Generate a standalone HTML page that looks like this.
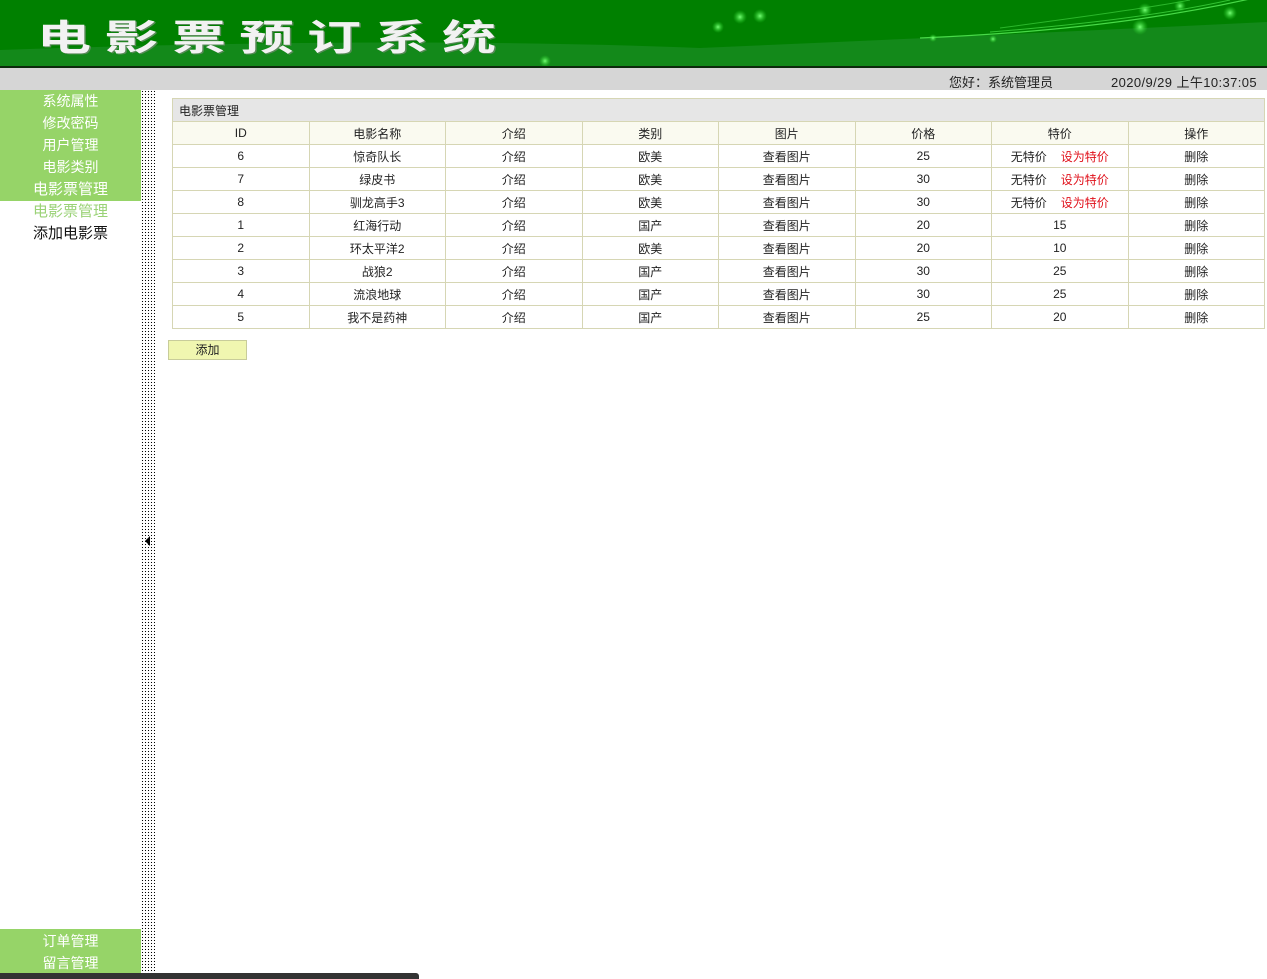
<!DOCTYPE html>
<html><head><meta charset="utf-8">
<style>
*{margin:0;padding:0;box-sizing:border-box}
body{width:1267px;height:979px;overflow:hidden;background:#fff;font-family:"Liberation Sans","Noto Sans CJK SC",sans-serif;font-size:12px;color:#222;position:relative}
#hdr{position:absolute;left:0;top:0;width:1267px;height:68px}
#bar{position:absolute;left:0;top:68px;width:1267px;height:22px;background:#d6d6d6;font-size:13px;color:#222}
#side{position:absolute;left:0;top:90px;width:141px;height:889px}
.g{background:#96d468;color:#fff;text-align:center;font-size:14px;line-height:22px}
.sub{text-align:center;font-size:14px;line-height:22px}
#dots{position:absolute;left:141px;top:90px;width:14px;height:889px;background-image:radial-gradient(#000 0.6px,transparent 0.8px);background-size:3px 3px}
table{position:absolute;left:172px;top:98px;width:1093px;border-collapse:collapse;font-size:12px;table-layout:fixed}
td{border:1px solid #d6d6b4;height:23px;text-align:center;padding:0}
tr.h td{background:#fafaf0}
td.t{background:#e6e6e6;text-align:left;padding-left:6px}
.r{color:#e0101a;margin-left:14px}
#btn{position:absolute;left:168px;top:340px;width:79px;height:20px;background:#f0f6b0;border:1px solid #c8cc9a;font-size:12px;text-align:center;line-height:18px}
#scroll{position:absolute;left:0;top:973px;width:419px;height:6px;background:#333;border-radius:0 3px 0 0}
#title{position:absolute;left:37px;top:13px;font-family:"Noto Sans CJK SC",sans-serif;font-weight:bold;font-size:36px;line-height:44px;color:#f2f2f2;letter-spacing:9px;transform:scaleX(1.5);transform-origin:0 0;white-space:nowrap;text-shadow:1px 1px 0 #5a8a5a}
</style></head><body>
<svg id="hdr" width="1267" height="68" viewBox="0 0 1267 68">
<defs>
<radialGradient id="gl"><stop offset="0" stop-color="#7f7"/><stop offset="1" stop-color="#2c2" stop-opacity="0"/></radialGradient>
</defs>
<rect width="1267" height="68" fill="#008000"/>
<path d="M0 50 Q400 36 700 48 Q1000 35 1267 22 L1267 66 L0 66Z" fill="#13891a"/>
<path d="M920 38 Q1120 30 1267 -5" stroke="#6f6" stroke-width="1.2" fill="none" opacity=".7"/>
<path d="M990 32 Q1140 20 1230 0" stroke="#5e5" stroke-width="1" fill="none" opacity=".6"/>
<path d="M1000 28 Q1150 8 1190 0" stroke="#5e5" stroke-width="1" fill="none" opacity=".5"/>
<circle cx="1140" cy="27" r="8" fill="url(#gl)"/><circle cx="1230" cy="13" r="7" fill="url(#gl)"/>
<circle cx="1145" cy="10" r="7" fill="url(#gl)"/><circle cx="1180" cy="6" r="6" fill="url(#gl)"/>
<circle cx="740" cy="17" r="7" fill="url(#gl)"/><circle cx="760" cy="16" r="7" fill="url(#gl)"/>
<circle cx="718" cy="27" r="6" fill="url(#gl)"/><circle cx="545" cy="61" r="6" fill="url(#gl)"/>
<circle cx="933" cy="38" r="4" fill="url(#gl)"/><circle cx="993" cy="39" r="4" fill="url(#gl)"/>
<rect y="66" width="1267" height="2" fill="#0c2a0c"/>
</svg>
<div id="title">电影票预订系统</div>
<div id="bar"><span style="position:absolute;left:949px;top:4px">您好：系统管理员</span><span style="position:absolute;left:1111px;top:4px;letter-spacing:0.4px">2020/9/29 上午10:37:05</span></div>
<div id="side">
<div class="g">系统属性<br>修改密码<br>用户管理<br>电影类别<br><span style="font-size:15px">电影票管理</span></div>
<div class="sub" style="color:#9ad276;font-size:15px">电影票管理</div>
<div class="sub" style="color:#111;font-size:15px">添加电影票</div>
<div class="g" style="position:absolute;top:839px;left:0;width:141px;height:50px;padding-top:1px">订单管理<br>留言管理</div>
</div>
<div id="dots"></div>
<svg style="position:absolute;left:144px;top:536px" width="8" height="10"><path d="M6 0 L1 5 L6 10Z" fill="#000"/></svg>
<table>
<colgroup><col><col><col><col><col><col><col><col></colgroup>
<tr><td class="t" colspan="8">电影票管理</td></tr>
<tr class="h"><td>ID</td><td>电影名称</td><td>介绍</td><td>类别</td><td>图片</td><td>价格</td><td>特价</td><td>操作</td></tr>
<tr><td>6</td><td>惊奇队长</td><td>介绍</td><td>欧美</td><td>查看图片</td><td>25</td><td>无特价<span class="r">设为特价</span></td><td>删除</td></tr>
<tr><td>7</td><td>绿皮书</td><td>介绍</td><td>欧美</td><td>查看图片</td><td>30</td><td>无特价<span class="r">设为特价</span></td><td>删除</td></tr>
<tr><td>8</td><td>驯龙高手3</td><td>介绍</td><td>欧美</td><td>查看图片</td><td>30</td><td>无特价<span class="r">设为特价</span></td><td>删除</td></tr>
<tr><td>1</td><td>红海行动</td><td>介绍</td><td>国产</td><td>查看图片</td><td>20</td><td>15</td><td>删除</td></tr>
<tr><td>2</td><td>环太平洋2</td><td>介绍</td><td>欧美</td><td>查看图片</td><td>20</td><td>10</td><td>删除</td></tr>
<tr><td>3</td><td>战狼2</td><td>介绍</td><td>国产</td><td>查看图片</td><td>30</td><td>25</td><td>删除</td></tr>
<tr><td>4</td><td>流浪地球</td><td>介绍</td><td>国产</td><td>查看图片</td><td>30</td><td>25</td><td>删除</td></tr>
<tr><td>5</td><td>我不是药神</td><td>介绍</td><td>国产</td><td>查看图片</td><td>25</td><td>20</td><td>删除</td></tr>
</table>
<div id="btn">添加</div>
<div id="scroll"></div>
</body></html>
